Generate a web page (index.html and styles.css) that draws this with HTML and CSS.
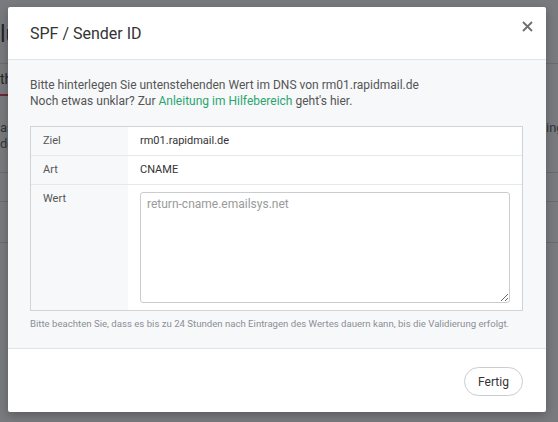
FILE: index.html
```html
<!DOCTYPE html>
<html lang="de">
<head>
<meta charset="utf-8">
<title>SPF / Sender ID</title>
<link rel="stylesheet" href="styles.css">
</head>
<body>
<div class="page">
  <div class="page-head"><span class="page-title"><span class="pre">Einstel</span>lungen</span></div>
  <div class="page-tabs"><span class="tab"><span class="pre">Au</span>thentifizierung</span></div>
  <div class="page-text">
    <div class="col">
      <p><span class="pre">B</span>assierend auf Ihrer Domain</p>
      <p><span class="pre">wer</span>den Mailings signiert.</p>
    </div>
    <div class="col right">
      <p><span class="pre">Sign</span>ing aktiv</p>
    </div>
  </div>
  <div class="page-row"></div>
  <div class="page-row small"></div>
</div>
<div class="backdrop"></div>
<div class="modal" role="dialog">
  <div class="modal-header">
    <h2 class="modal-title">SPF / Sender ID</h2>
    <button class="close" aria-label="Schließen">
      <svg width="11" height="11" viewBox="0 0 11 11"><path d="M1 1L10 10M10 1L1 10" stroke="#6f6f6f" stroke-width="1.8" fill="none"/></svg>
    </button>
  </div>
  <div class="modal-body">
    <p class="intro">Bitte hinterlegen Sie untenstehenden Wert im DNS von rm01.rapidmail.de<br>Noch etwas unklar? Zur <a href="#" class="link">Anleitung im Hilfebereich</a> geht's hier.</p>
    <div class="dns-table">
      <div class="row">
        <div class="label">Ziel</div>
        <div class="value">rm01.rapidmail.de</div>
      </div>
      <div class="row">
        <div class="label">Art</div>
        <div class="value">CNAME</div>
      </div>
      <div class="row last">
        <div class="label">Wert</div>
        <div class="value area"><textarea placeholder="return-cname.emailsys.net"></textarea></div>
      </div>
    </div>
    <p class="note">Bitte beachten Sie, dass es bis zu 24 Stunden nach Eintragen des Wertes dauern kann, bis die Validierung erfolgt.</p>
  </div>
  <div class="modal-footer">
    <button class="btn">Fertig</button>
  </div>
</div>
</body>
</html>
```
FILE: styles.css
```css
* { box-sizing: border-box; }
html, body { margin: 0; padding: 0; }
body {
  width: 558px;
  height: 422px;
  overflow: hidden;
  background: #ffffff;
  font-family: Roboto, "Liberation Sans", sans-serif;
  position: relative;
}
.page { margin-left: -130px; width: 820px; }
.pre { display: inline-block; width: 130px; text-align: right; }
.right .pre { width: 546px; }
.page-head {
  height: 64px;
  border-bottom: 1px solid #d8dadd;
  display: flex;
  align-items: center;
}
.page-title { font-size: 23px; color: #1f2a44; margin-top: 6px; white-space: nowrap; }
.page-tabs {
  height: 32px;
  display: flex;
  align-items: flex-start;
}
.tab {
  font-size: 14px;
  color: #333;
  padding: 7px 0 7px 0;
  border-bottom: 2px solid #d9304f;
  width: 170px;
  line-height: 16px;
  white-space: nowrap;
}
.page-text {
  height: 77px;
  border-bottom: 1px solid #d8dadd;
  display: grid;
  grid-template-columns: 130px 1fr;
  padding-top: 24px;
  position: relative;
}
.page-text .right { position: absolute; left: 130px; top: 24px; }
.page-text p { margin: 0; font-size: 13px; line-height: 16px; color: #555; white-space: nowrap; }
.page-row { height: 29px; border-bottom: 1px solid #d8dadd; }
.page-row.small { height: 41px; }

.backdrop {
  position: absolute;
  inset: 0;
  background: rgba(30, 33, 38, 0.6);
}
.modal {
  position: absolute;
  left: 8px;
  top: 7px;
  width: 538px;
  height: 405px;
  background: #fff;
  border-radius: 2px;
  box-shadow: 0 3px 10px rgba(0,0,0,0.25);
  display: flex;
  flex-direction: column;
}
.modal-header {
  height: 53px;
  border-bottom: 1px solid #e1e4e8;
  display: flex;
  align-items: center;
  justify-content: space-between;
  padding: 0 12px 0 22px;
}
.modal-title {
  margin: 0;
  font-size: 16px;
  font-weight: 400;
  color: #333;
  padding-top: 1px;
}
.close {
  border: 0;
  background: none;
  padding: 0;
  width: 13px;
  height: 13px;
  display: flex;
  align-items: center;
  justify-content: center;
  margin-top: -14px;
}
.modal-body {
  background: #f7f8fa;
  padding: 17px 23px 18px 22px;
  border-bottom: 1px solid #e1e4e8;
}
.intro {
  margin: 0 0 17px 0;
  font-size: 12px;
  line-height: 16px;
  color: #555;
}
.link { color: #2ba56e; text-decoration: none; }
.dns-table {
  border: 1px solid #d0d4d9;
  background: #fff;
}
.row {
  display: flex;
  border-bottom: 1px solid #e5e8ec;
  font-size: 11px;
}
.row.last { border-bottom: 0; }
.label {
  width: 97px;
  background: #f7f8fa;
  padding: 8px 12px 0 12px;
  color: #555;
  line-height: 12px;
}
.value {
  flex: 1;
  padding: 8px 12px 8px 12px;
  color: #333;
  line-height: 12px;
  height: 28px;
}
.value.area {
  height: auto;
  padding: 7px 12px 7px 12px;
}
textarea {
  display: block;
  width: 370px;
  height: 111px;
  border: 1px solid #c9cdd2;
  border-radius: 3px;
  font-family: Roboto, "Liberation Sans", sans-serif;
  font-size: 12px;
  padding: 4px 6px;
  color: #333;
  resize: vertical;
}
textarea::placeholder { color: #9a9a9a; }
.note {
  margin: 7px 0 0 0;
  font-size: 9.6px;
  line-height: 12px;
  color: #8a8f96;
}
.modal-footer {
  flex: 1;
  display: flex;
  justify-content: flex-end;
  align-items: center;
  padding: 0 23px 0 22px;
}
.btn {
  width: 59px;
  height: 29px;
  border: 1px solid #c9cdd2;
  border-radius: 15px;
  background: #fff;
  font-family: Roboto, "Liberation Sans", sans-serif;
  font-size: 12px;
  color: #333;
  padding: 0;
  margin-top: 2px;
}
```
